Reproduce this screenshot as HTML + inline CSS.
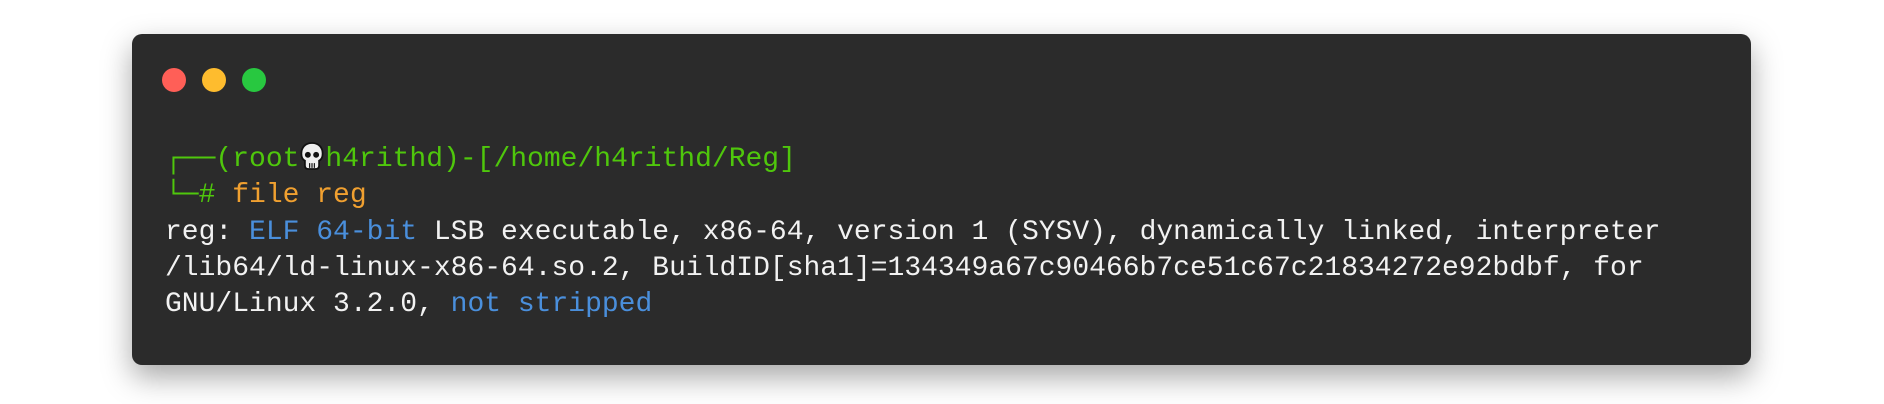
<!DOCTYPE html>
<html><head><meta charset="utf-8"><style>
html,body{margin:0;padding:0;background:#fff;width:1884px;height:404px;overflow:hidden}
.card{position:absolute;left:132px;top:34px;width:1619px;height:331px;background:#2b2b2b;border-radius:10px;box-shadow:0 12px 30px rgba(0,0,0,0.35)}
.dot{position:absolute;top:68px;width:24px;height:24px;border-radius:50%}
.l{position:absolute;left:165px;white-space:pre;font-family:"Liberation Mono","DejaVu Sans Mono",monospace;line-height:1;color:#f2f2f2;font-size:28px}
.g{color:#4fc70c}.y{color:#f0a030}.b{color:#4a8fdc}
</style></head><body>
<div class="card"></div>
<div class="dot" style="left:162px;background:#ff5f57"></div>
<div class="dot" style="left:202px;background:#febc2e"></div>
<div class="dot" style="left:242px;background:#28c840"></div>
<div class="l g" style="top:141px">┌──(root<svg width="26" height="30" viewBox="0 0 22 24" style="vertical-align:-5px"><path d="M11 1C5 1 2 5 2 10c0 3 1 5 3 6v4c0 2 1 3 3 3h6c2 0 3-1 3-3v-4c2-1 3-3 3-6 0-5-3-9-9-9z" fill="#eee" stroke="#111" stroke-width="1.5"/><circle cx="7.5" cy="11" r="2.5" fill="#111"/><circle cx="14.5" cy="11" r="2.5" fill="#111"/><path d="M9 18v4M11 18v4M13 18v4" stroke="#111" stroke-width="1"/></svg>h4rithd)-[/home/h4rithd/Reg]</div>
<div class="l" style="top:182px"><span class="g">└─#</span> <span class="y">file reg</span></div>
<div class="l" style="top:219px">reg: <span class="b">ELF 64-bit</span> LSB executable, x86-64, version 1 (SYSV), dynamically linked, interpreter</div>
<div class="l" style="top:255px">/lib64/ld-linux-x86-64.so.2, BuildID[sha1]=134349a67c90466b7ce51c67c21834272e92bdbf, for</div>
<div class="l" style="top:291px">GNU/Linux 3.2.0, <span class="b">not stripped</span></div>
</body></html>
